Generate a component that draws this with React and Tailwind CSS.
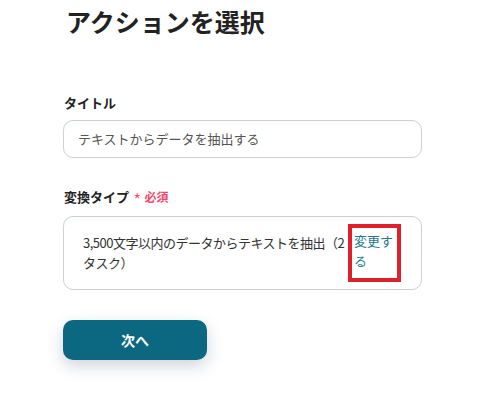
export default function App() {
  const font = { fontFamily: '"Noto Sans CJK JP", "Noto Sans", sans-serif' };
  return (
    <div className="w-[478px] h-[401px] bg-white overflow-hidden" style={font}>
      <div className="pl-[63px] pr-[56px] pt-[3px]">
        <h1 className="text-[25px] leading-[36px] font-bold text-[#222] pl-[3px]">アクションを選択</h1>
        <div className="mt-[54px]">
          <div className="text-[13px] leading-[20px] font-bold text-[#222] pl-[1px]">タイトル</div>
          <div className="mt-[7px] h-[38px] border border-[#ccd1d6] rounded-[10px] flex items-center px-[14px] text-[13px] text-[#555]">
            テキストからデータを抽出する
          </div>
        </div>
        <div className="mt-[25px]">
          <div className="flex items-center text-[13px] leading-[20px] pl-[1px]">
            <span className="font-bold text-[#222]">変換タイプ</span>
            <span className="ml-[4px] text-[#ef4a6d] text-[19px] font-light leading-[20px] pt-[7px]">*</span>
            <span className="ml-[3px] text-[#ef4a6d] text-[12px] font-bold">必須</span>
          </div>
          <div className="mt-[6px] h-[74px] border border-[#ccd1d6] rounded-[10px] flex items-center pl-[19px] pr-[20px]">
            <div className="flex-1 min-w-0 text-[13px] leading-[20px] text-[#333] tracking-[-0.5px] whitespace-nowrap">
              3,500文字以内のデータからテキストを抽出（2
              <br />
              タスク）
            </div>
            <div className="shrink-0 ml-[2px] w-[53px] h-[58px] border-[4px] border-[#e0202a] flex items-start pt-[3px] pl-[2px] pr-[2px]">
              <span className="text-[13px] leading-[20px] text-[#1f7a8c]">変更する</span>
            </div>
          </div>
        </div>
        <button className="mt-[30px] w-[144px] h-[40px] rounded-[10px] bg-[#0b6880] text-white text-[14px] font-bold shadow-[0_6px_16px_rgba(40,60,90,0.22)]">
          次へ
        </button>
      </div>
    </div>
  );
}
